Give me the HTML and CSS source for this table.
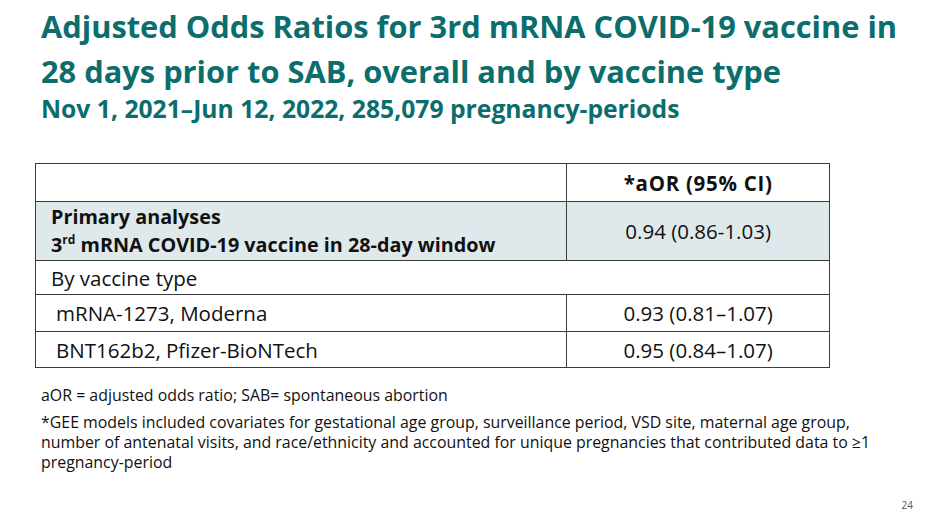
FILE: index.html
```html
<!DOCTYPE html>
<html lang="en">
<head>
<meta charset="utf-8">
<title>Adjusted Odds Ratios</title>
<link rel="stylesheet" href="styles.css">
</head>
<body>
<div class="slide">
  <header class="heading">
    <h1 class="title">Adjusted Odds Ratios for 3rd mRNA COVID-19 vaccine in<br>28 days prior to SAB, overall and by vaccine type</h1>
    <p class="subtitle">Nov 1, 2021–Jun 12, 2022, 285,079 pregnancy-periods</p>
  </header>
  <table class="results">
    <colgroup><col class="c-label"><col class="c-value"></colgroup>
    <tr class="r-head">
      <th></th>
      <th class="val">*aOR (95% CI)</th>
    </tr>
    <tr class="r-primary">
      <td class="lbl bold">Primary analyses<br>3<sup>rd</sup> mRNA COVID-19 vaccine in 28-day window</td>
      <td class="val">0.94 (0.86-1.03)</td>
    </tr>
    <tr class="r-group">
      <td class="lbl" colspan="2">By vaccine type</td>
    </tr>
    <tr class="r-item">
      <td class="lbl sub">mRNA-1273, Moderna</td>
      <td class="val">0.93 (0.81–1.07)</td>
    </tr>
    <tr class="r-item last">
      <td class="lbl sub">BNT162b2, Pfizer-BioNTech</td>
      <td class="val">0.95 (0.84–1.07)</td>
    </tr>
  </table>
  <div class="notes">
    <p class="note first">aOR = adjusted odds ratio; SAB= spontaneous abortion</p>
    <p class="note">*GEE models included covariates for gestational age group, surveillance period, VSD site, maternal age group, number of antenatal visits, and race/ethnicity and accounted for unique pregnancies that contributed data to ≥1 pregnancy-period</p>
  </div>
  <div class="pagenum">24</div>
</div>
</body>
</html>
```

FILE: styles.css
```css
html, body {
  margin: 0;
  padding: 0;
  background: #ffffff;
}
body {
  font-family: "Open Sans", Lato, "Liberation Sans", sans-serif;
  color: #1a1a1a;
}
.slide {
  position: relative;
  width: 928px;
  height: 522px;
  overflow: hidden;
  display: flex;
  flex-direction: column;
  padding: 4px 0 0 0;
  box-sizing: border-box;
}
.heading {
  padding-left: 41px;
}
.title {
  margin: 0;
  font-size: 30.8px;
  line-height: 45px;
  font-weight: 700;
  color: #0b6d6c;
  white-space: nowrap;
}
.subtitle {
  margin: 0;
  font-size: 24.7px;
  line-height: 30px;
  font-weight: 700;
  color: #0b6d6c;
  white-space: nowrap;
}
.results {
  margin: 39px 0 0 35px;
  width: 795px;
  border-collapse: collapse;
  font-size: 20.5px;
  line-height: 26px;
  color: #111;
}
.c-label { width: 532px; }
.c-value { width: 263px; }
.results th, .results td {
  border: 1px solid #3c3c3c;
  padding: 0;
  vertical-align: middle;
}
.r-head th {
  height: 37px;
  font-weight: 700;
  letter-spacing: 0.7px;
}
.val {
  text-align: center;
}
.lbl {
  text-align: left;
  padding-left: 15px !important;
}
.lbl.sub {
  padding-left: 20px !important;
}
.bold {
  font-weight: 700;
  font-size: 19.8px;
}
.r-primary td {
  background: #dfe9ec;
  height: 58px;
  line-height: 28px;
}
.r-primary sup {
  font-size: 12px;
  line-height: 0;
  vertical-align: 8px;
}
.r-group td {
  height: 33px;
}
.r-item td {
  height: 36px;
}
.r-item.last td {
  height: 35px;
}
.notes {
  padding: 17px 30px 0 41px;
  font-size: 15.9px;
  color: #111;
}
.note {
  margin: 0;
  line-height: 20px;
}
.note.first {
  margin-bottom: 7px;
}
.pagenum {
  position: absolute;
  right: 15px;
  bottom: 10px;
  font-size: 10px;
  color: #555;
}
```
